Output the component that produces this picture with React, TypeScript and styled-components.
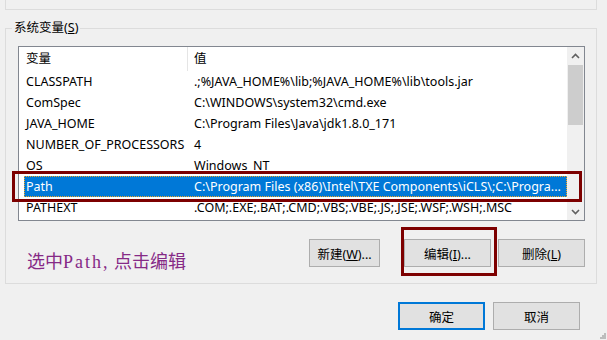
import React from "react";
import styled, { createGlobalStyle } from "styled-components";

const GlobalStyle = createGlobalStyle`
    html, body {
        margin: 0;
        padding: 0;
        background: #f0f0f0;
    }
    body {
        font-family: "Noto Sans", "Noto Sans CJK SC", sans-serif;
        font-size: 12.5px;
        color: #000;
    }
    * {
        box-sizing: border-box;
    }
`;

const StyledWindow = styled.div`
    position: relative;
    width: 607px;
    height: 340px;
    overflow: hidden;
    background: #f0f0f0;
`;

const StyledTopGroup = styled.div`
    width: 592px;
    height: 10px;
    margin-left: 5px;
    border: 1px solid #dcdcdc;
    border-top: none;
`;

const StyledGroup = styled.fieldset`
    width: 592px;
    min-width: 0;
    margin: 10px 0 0 5px;
    padding: 0 6px 16px 6px;
    border: 1px solid #dcdcdc;
`;

const StyledLegend = styled.legend`
    padding: 0 2px;
    line-height: 16px;
    font-size: 12.5px;
`;

const StyledListBox = styled.div`
    display: flex;
    height: 175px;
    margin: 10px 5px 0 6px;
    border: 1px solid #828790;
    background: #fff;
`;

const StyledListBody = styled.div`
    flex: 1;
    min-width: 0;
    padding-left: 5px;
`;

const StyledHeaderRow = styled.div`
    display: grid;
    grid-template-columns: 164px 1fr;
    height: 24px;
`;

const StyledHeaderCell = styled.div<{ $divider?: boolean }>`
    padding-left: ${(p) => (p.$divider ? "2px" : "6px")};
    line-height: 24px;
    border-right: ${(p) => (p.$divider ? "1px solid #e5e5e5" : "none")};
`;

const StyledRow = styled.div<{ $selected?: boolean }>`
    position: relative;
    display: grid;
    grid-template-columns: 164px 1fr;
    height: 21px;
    line-height: 21px;
    white-space: nowrap;
    background: ${(p) => (p.$selected ? "#0078d7" : "transparent")};
    color: ${(p) => (p.$selected ? "#fff" : "#000")};
    outline: ${(p) => (p.$selected ? "1px dotted #f5a623" : "none")};
    outline-offset: -1px;

    &::after {
        content: "";
        display: ${(p) => (p.$selected ? "block" : "none")};
        position: absolute;
        top: -5px;
        bottom: -5px;
        left: -12px;
        right: -15px;
        border: 3px solid #7d0000;
        pointer-events: none;
    }
`;

const StyledName = styled.div`
    padding-left: 2px;
    overflow: hidden;
`;

const StyledValue = styled.div`
    padding-left: 6px;
    overflow: hidden;
    text-overflow: ellipsis;
`;

const StyledScrollBar = styled.div`
    display: flex;
    flex-direction: column;
    width: 17px;
    background: #f0f0f0;
`;

const StyledArrow = styled.div`
    display: flex;
    align-items: center;
    justify-content: center;
    height: 17px;
`;

const StyledThumb = styled.div`
    height: 60px;
    margin: 1px 1px 0 1px;
    background: #cdcdcd;
`;

const StyledTrack = styled.div`
    flex: 1;
`;

const StyledActionRow = styled.div`
    display: flex;
    align-items: center;
    justify-content: space-between;
    margin: 18px 5px 0 0;
`;

const StyledHint = styled.div`
    align-self: flex-end;
    margin: 0 0 -5px 15px;
    font-family: "Liberation Serif", "Noto Sans CJK SC", serif;
    font-size: 18px;
    line-height: 20px;
    color: #862a86;
`;

const StyledHintLatin = styled.span`
    letter-spacing: 2px;
`;

const StyledButtonGroup = styled.div`
    display: flex;
    gap: 7px;
`;

const StyledButton = styled.button<{ $width: number; $default?: boolean; $marked?: boolean }>`
    position: relative;
    width: ${(p) => p.$width}px;
    height: 28px;
    padding: 0;
    background: #e1e1e1;
    border: ${(p) => (p.$default ? "2px solid #0078d7" : "1px solid #adadad")};
    font-family: "Noto Sans", "Noto Sans CJK SC", sans-serif;
    font-size: 12.5px;
    color: #000;

    &::after {
        content: "";
        display: ${(p) => (p.$marked ? "block" : "none")};
        position: absolute;
        top: -13px;
        bottom: -10px;
        left: -4px;
        right: -7px;
        border: 3px solid #7d0000;
        pointer-events: none;
    }
`;

const StyledNewButton = styled(StyledButton)`
    margin-right: 17px;
`;

const StyledFooter = styled.div`
    display: flex;
    justify-content: flex-end;
    gap: 8px;
    margin-top: 18px;
    padding-right: 27px;
`;

const StyledGrip = styled.svg`
    position: absolute;
    right: 1px;
    bottom: 1px;
`;

const rows = [
    { name: "CLASSPATH", value: ".;%JAVA_HOME%\\lib;%JAVA_HOME%\\lib\\tools.jar" },
    { name: "ComSpec", value: "C:\\WINDOWS\\system32\\cmd.exe" },
    { name: "JAVA_HOME", value: "C:\\Program Files\\Java\\jdk1.8.0_171" },
    { name: "NUMBER_OF_PROCESSORS", value: "4" },
    { name: "OS", value: "Windows_NT" },
    { name: "Path", value: "C:\\Program Files (x86)\\Intel\\TXE Components\\iCLS\\;C:\\Progra...", selected: true },
    { name: "PATHEXT", value: ".COM;.EXE;.BAT;.CMD;.VBS;.VBE;.JS;.JSE;.WSF;.WSH;.MSC" },
];

const Chevron = ({ down }: { down?: boolean }) => (
    <svg width="9" height="6" viewBox="0 0 9 6">
        <path
            d={down ? "M1 1 L4.5 4.5 L8 1" : "M1 5 L4.5 1.5 L8 5"}
            fill="none"
            stroke="#606060"
            strokeWidth="1.6"
        />
    </svg>
);

const App = () => {
    return (
        <StyledWindow>
            <GlobalStyle />
            <StyledTopGroup />
            <StyledGroup>
                <StyledLegend>系统变量(<u>S</u>)</StyledLegend>
                <StyledListBox>
                    <StyledListBody>
                        <StyledHeaderRow>
                            <StyledHeaderCell $divider>变量</StyledHeaderCell>
                            <StyledHeaderCell>值</StyledHeaderCell>
                        </StyledHeaderRow>
                        {rows.map((r) => (
                            <StyledRow key={r.name} $selected={r.selected}>
                                <StyledName>{r.name}</StyledName>
                                <StyledValue>{r.value}</StyledValue>
                            </StyledRow>
                        ))}
                    </StyledListBody>
                    <StyledScrollBar>
                        <StyledArrow><Chevron /></StyledArrow>
                        <StyledThumb />
                        <StyledTrack />
                        <StyledArrow><Chevron down /></StyledArrow>
                    </StyledScrollBar>
                </StyledListBox>
                <StyledActionRow>
                    <StyledHint>选中<StyledHintLatin>Path,</StyledHintLatin> 点击编辑</StyledHint>
                    <StyledButtonGroup>
                        <StyledNewButton $width={71}>新建(<u>W</u>)...</StyledNewButton>
                        <StyledButton $width={87} $marked>编辑(<u>I</u>)...</StyledButton>
                        <StyledButton $width={87}>删除(<u>L</u>)</StyledButton>
                    </StyledButtonGroup>
                </StyledActionRow>
            </StyledGroup>
            <StyledFooter>
                <StyledButton $width={87} $default>确定</StyledButton>
                <StyledButton $width={87}>取消</StyledButton>
            </StyledFooter>
            <StyledGrip width="6" height="6" viewBox="0 0 6 6">
                <rect x="4" y="0" width="2" height="2" fill="#bcbcbc" />
                <rect x="2" y="2" width="2" height="2" fill="#bcbcbc" />
                <rect x="4" y="2" width="2" height="2" fill="#bcbcbc" />
                <rect x="0" y="4" width="2" height="2" fill="#bcbcbc" />
                <rect x="2" y="4" width="2" height="2" fill="#bcbcbc" />
                <rect x="4" y="4" width="2" height="2" fill="#bcbcbc" />
            </StyledGrip>
        </StyledWindow>
    );
};

export default App;
